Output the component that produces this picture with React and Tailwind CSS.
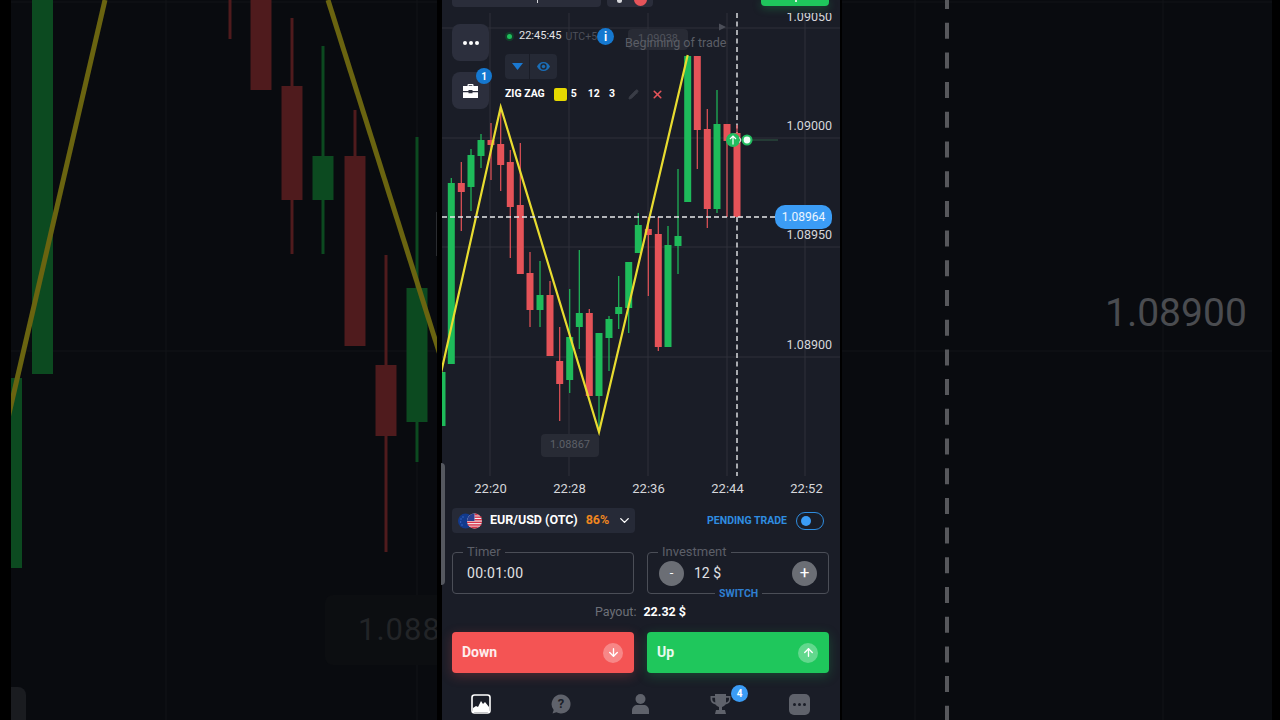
import { ArrowDown, ArrowUp, ChevronDown, Pencil, X } from 'lucide-react';

const FONT = 'font-[Roboto,"Liberation_Sans",sans-serif]';

// x, wick top, wick bottom, body top, body bottom, up?
const candles = [
  [451.3, 178, 364, 183, 364, 1],
  [461.3, 162, 231, 183, 192, 0],
  [471, 149, 211, 155, 187, 1],
  [481, 134, 168, 140, 156, 1],
  [491, 123, 180, 140, 145, 0],
  [500.7, 108, 191, 144, 165, 0],
  [510.3, 150, 258, 162, 207, 0],
  [520.3, 143, 274, 205, 274, 0],
  [530, 252, 327, 273, 310, 0],
  [540, 261, 327, 295, 310, 1],
  [550, 281, 356, 295, 356, 0],
  [559.7, 327, 421, 361, 384, 0],
  [569.7, 289, 393, 337, 380, 1],
  [579.3, 250, 349, 313, 327, 1],
  [589.3, 309, 396, 313, 396, 0],
  [599, 333, 432, 333, 396, 1],
  [609, 316, 371, 319, 338, 1],
  [618.7, 276, 329, 307, 314, 1],
  [628.7, 262, 333, 262, 308, 1],
  [638.3, 213, 253, 225, 253, 1],
  [648.3, 217, 296, 229, 235, 0],
  [658.3, 217, 351, 234, 347, 0],
  [668, 226, 347, 245, 347, 1],
  [678, 169, 274, 236, 246, 1],
  [687.7, 56, 202, 56, 202, 1],
  [697.3, 56, 169, 56, 130, 0],
  [707.3, 109, 228, 129, 209, 0],
  [717, 90, 213, 124, 209, 1],
  [727, 124, 217, 124, 141, 0],
  [737, 125, 217, 133, 217, 0],
];

// the blurred copies of the chart left and right of the phone video
const sideCandles = [
  [16.5, 378, 568, 378, 568, 1, 11],
  [42.5, 0, 374, 0, 374, 1, 21],
  [230, 0, 39, 0, 0, 0, 3],
  [261, 0, 90, 0, 90, 0, 21],
  [292, 18, 254, 86, 200, 0, 21],
  [323, 46, 254, 156, 200, 1, 21],
  [355, 110, 346, 156, 346, 0, 21],
  [386, 255, 552, 365, 436, 0, 21],
  [417, 137, 462, 288, 422, 1, 21],
];

const priceLabels = [
  ['1.09050', 'top-[-4px]'],
  ['1.09000', 'top-[105px]'],
  ['1.08950', 'top-[214px]'],
  ['1.08900', 'top-[324px]'],
];

function Chart() {
  return (
    <svg viewBox="442 13 398 463" className="block w-[398px] h-[463px]">
      <g stroke="#2e313b" strokeWidth="1">
        {[28, 138, 247, 357].map((y) => (
          <line key={y} x1="442" x2="840" y1={y} y2={y} />
        ))}
        {[490, 569, 648, 727, 805].map((x) => (
          <line key={x} x1={x} x2={x} y1="13" y2="476" />
        ))}
      </g>
      <line x1="737" x2="737" y1="13" y2="476" stroke="#e6e7ea" strokeWidth="1.4" strokeDasharray="5 3.5" />
      <rect x="442" y="372" width="3.5" height="54" fill="#1ebb5a" />
      {candles.map(([x, wt, wb, bt, bb, up]) => (
        <g key={x} fill={up ? '#1ebb5a' : '#e55358'}>
          <rect x={x - 0.6} y={wt} width="1.2" height={wb - wt} />
          <rect x={x - 3.5} y={bt} width="7" height={bb - bt} />
        </g>
      ))}
      <polyline
        points="441,373 500.7,107 599,432 687.7,55"
        fill="none"
        stroke="#e8dc30"
        strokeWidth="2.2"
      />
      <line x1="442" x2="775" y1="217" y2="217" stroke="#e6e7ea" strokeWidth="1.4" strokeDasharray="5 3" />
      <line x1="752" x2="778" y1="140" y2="140" stroke="#2e5a45" strokeWidth="1" />
      <circle cx="733" cy="140" r="7" fill="#22bd5f" />
      <path d="M733 144.5v-8.5M730 139l3-3 3 3" fill="none" stroke="#fff" strokeWidth="1.2" />
      <path d="M739.5 137.5l1.5 2.5-1.5 2.5" fill="none" stroke="#fff" strokeWidth="1" />
      <circle cx="747" cy="140" r="5.5" fill="#22bd5f" />
      <circle cx="747" cy="140" r="3.4" fill="#f2fff7" />
      <path d="M719 23.5l7 3.5-7 3.5z" fill="#4b4e58" />
    </svg>
  );
}

function SideChartLeft() {
  return (
    <svg viewBox="11 0 426 720" className="block w-[426px] h-[720px]">
      <g stroke="#121418" strokeWidth="1">
        <line x1="11" x2="437" y1="351" y2="351" />
        <line x1="11" x2="437" y1="2" y2="2" />
        <line x1="166" x2="166" y1="0" y2="720" />
        <line x1="417" x2="417" y1="0" y2="720" />
      </g>
      {sideCandles.map(([x, wt, wb, bt, bb, up, w]) => (
        <g key={x} fill={up ? '#0c4a20' : '#4f1b1d'}>
          <rect x={x - 1.5} y={wt} width="3" height={wb - wt} />
          <rect x={x - w / 2} y={bt} width={w} height={bb - bt} />
        </g>
      ))}
      <polyline points="8,418 105,0" fill="none" stroke="#6a6410" strokeWidth="5" />
      <polyline points="328,0 440,355" fill="none" stroke="#6a6410" strokeWidth="5" />
      <rect x="436" y="212" width="1" height="44" fill="#2a2c30" />
    </svg>
  );
}

function SideChartRight() {
  return (
    <svg viewBox="842 0 430 720" className="block w-[430px] h-[720px]">
      <g stroke="#121418" strokeWidth="1">
        <line x1="842" x2="1272" y1="351" y2="351" />
        <line x1="842" x2="1272" y1="2" y2="2" />
        <line x1="915" x2="915" y1="0" y2="720" />
        <line x1="1163" x2="1163" y1="0" y2="720" />
      </g>
      <line x1="947" x2="947" y1="-7" y2="720" stroke="#57585c" strokeWidth="4" strokeDasharray="16 13.7" />
    </svg>
  );
}

function Field({ label, children }) {
  return (
    <div className="relative flex-1 h-[42px] border border-[#4b4e57] rounded flex items-center">
      <span className="absolute left-[10px] top-[-9px] bg-[#1a1d27] px-[4px] text-[13px] leading-[16px] text-[#5c5f68]">
        {label}
      </span>
      {children}
    </div>
  );
}

function TradeButton({ label, bg, shadow, Icon }) {
  return (
    <button className={`flex-1 h-[41px] rounded flex items-center justify-between pl-[10px] pr-[11px] ${bg} ${shadow}`}>
      <span className="text-[14px] font-bold text-white/90">{label}</span>
      <span className="w-[20px] h-[20px] rounded-full bg-white/30 flex items-center justify-center">
        <Icon size={13} strokeWidth={2.5} className="text-white" />
      </span>
    </button>
  );
}

function Flags() {
  return (
    <svg viewBox="0 0 26 16" className="w-[26px] h-[16px]">
      <circle cx="7.5" cy="8" r="7.5" fill="#123a8c" />
      <g fill="#3f6fd0">
        <circle cx="5" cy="4" r="0.7" />
        <circle cx="3" cy="6" r="0.7" />
        <circle cx="2.6" cy="9" r="0.7" />
        <circle cx="4" cy="12" r="0.7" />
      </g>
      <circle cx="16.5" cy="8" r="7.5" fill="#f4f4f6" />
      <g fill="#d8344a">
        <path d="M16.5 .5a7.5 7.5 0 0 1 5 1.9h-5z" />
        <rect x="16.5" y="3.4" width="7" height="1.5" />
        <rect x="16.5" y="6" width="7.5" height="1.5" />
        <rect x="9" y="8.6" width="15" height="1.5" />
        <rect x="9.8" y="11.2" width="13.4" height="1.5" />
        <path d="M11.5 13.6h10a7.5 7.5 0 0 1-10 0z" />
      </g>
      <path d="M16.5.5v7.4H9a7.5 7.5 0 0 1 7.5-7.4z" fill="#2a3f8f" />
    </svg>
  );
}

function BottomNav() {
  return (
    <div className="h-[47px] flex items-start pt-[21px] text-[#5f626b]">
      <div className="w-[80px] ml-[-1px] flex justify-center">
        <svg width="20" height="20" viewBox="0 0 20 20">
          <rect x="1" y="1" width="18" height="18" rx="2.5" fill="#1a1d27" stroke="#fff" strokeWidth="1.6" />
          <path d="M2 18V14l3-2 2 1 3-6 2 3 2-2 4 5v5z" fill="#fff" />
        </svg>
      </div>
      <div className="w-[80px] flex justify-center">
        <div className="relative w-[20px] h-[20px]">
          <svg width="20" height="20" viewBox="0 0 20 20" fill="currentColor">
            <path d="M10 .5a9.500 9.500 0 1 1-4.600 17.800L1.500 19.500l1.200-3.600A9.500 9.500 0 0 1 10 .5z" />
          </svg>
          <span className="absolute inset-0 flex items-center justify-center text-[13px] font-bold text-[#1a1d27]">?</span>
        </div>
      </div>
      <div className="w-[79px] flex justify-center">
        <svg width="19" height="20" viewBox="0 0 19 20" fill="currentColor">
          <circle cx="9.5" cy="5" r="5" />
          <path d="M1 20v-3.500C1 13 3.500 11 6.500 11h6c3 0 5.500 2 5.500 5.500V20z" />
        </svg>
      </div>
      <div className="relative w-[80px] flex justify-center">
        <svg width="21" height="20" viewBox="0 0 21 20" fill="currentColor">
          <path fillRule="evenodd" d="M5 0h11v2h4.500v3c0 3-2 5-5 5.500-.8 1.200-2 2-3.500 2.400V16h3l1 4H5l1-4h3v-3.100c-1.500-.4-2.700-1.200-3.500-2.400-3-.5-5-2.500-5-5.500V2H5zm0 3.800H2.300V5c0 1.700 1 3 3 3.600zm11 0v4.800c2-.6 3-1.900 3-3.600V3.800z" />
        </svg>
        <span className="absolute left-[51px] top-[-9px] w-[17px] h-[17px] rounded-full bg-[#3b9cf5] flex items-center justify-center text-[10px] font-bold text-white">
          4
        </span>
      </div>
      <div className="w-[79px] flex justify-center">
        <div className="w-[21px] h-[21px] rounded-[5px] bg-[#5f626b] flex items-center justify-center gap-[2px]">
          <span className="w-[3px] h-[3px] rounded-full bg-[#1a1d27]" />
          <span className="w-[3px] h-[3px] rounded-full bg-[#1a1d27]" />
          <span className="w-[3px] h-[3px] rounded-full bg-[#1a1d27]" />
        </div>
      </div>
    </div>
  );
}

export default function App() {
  return (
    <div className={`flex w-[1280px] h-[720px] overflow-hidden bg-black ${FONT}`}>
      <div className="relative w-[442px] pl-[11px] overflow-hidden">
        <div className="w-[426px] h-[720px] bg-[#090b0f] overflow-hidden relative">
          <SideChartLeft />
          <div className="absolute left-[314px] top-[595px] w-[130px] h-[70px] rounded-lg bg-[#0c0e11] pl-[33px] flex items-center text-[31px] tracking-[1px] text-[#222427]">
            1.08867
          </div>
          <div className="absolute left-0 top-[687px] w-[15px] h-[40px] rounded-tr-lg bg-[#1a1c20]" />
        </div>
      </div>

      <div className="relative w-[398px] h-[720px] bg-[#1a1d27] flex flex-col">
        <div className="absolute left-[-1px] top-[463px] w-[4px] h-[122px] rounded-r bg-[#55585f]" />

        {/* top of the cropped header */}
        <div className="h-[13px] flex items-start pl-[10px] pr-[11px]">
          <div className="relative w-[149px] h-[7px] rounded-b bg-[#2a2d3a]">
            <span className="absolute left-[85px] top-0 w-[1px] h-[3px] bg-[#d6d7db]" />
          </div>
          <div className="ml-[6px] w-[46px] h-[7px] rounded-b bg-[#2a2d3a] relative overflow-hidden">
            <span className="absolute left-[10px] top-0 w-[5px] h-[3px] rounded-b bg-[#d6d7db]" />
            <span className="absolute left-[27px] top-[-7px] w-[13px] h-[13px] rounded-full bg-[#e5545a]" />
          </div>
          <div className="relative ml-auto w-[68px] h-[6px] rounded-b bg-[#1fc75c] shadow-[0_2px_8px_rgba(31,199,92,0.35)]">
            <span className="absolute left-[34px] top-0 w-[2px] h-[2px] bg-white/80" />
          </div>
        </div>

        <div className="relative h-[463px] overflow-hidden">
          <Chart />

          {priceLabels.map(([text, top]) => (
            <span key={text} className={`absolute right-[8px] text-[12.5px] leading-[16px] text-[#d6d7db] ${top}`}>
              {text}
            </span>
          ))}

          <div className="absolute left-[333px] top-[192px] w-[57px] h-[24px] rounded-[10px] bg-[#3b9cf5] flex items-center justify-center text-[12px] text-white/90">
            1.08964
          </div>

          <div className="absolute left-[10px] top-[11px] flex flex-col gap-[11px]">
            <div className="w-[37px] h-[37px] rounded-lg bg-[#2c2f3d] flex items-center justify-center gap-[2px]">
              <span className="w-[4px] h-[4px] rounded-full bg-white" />
              <span className="w-[4px] h-[4px] rounded-full bg-white" />
              <span className="w-[4px] h-[4px] rounded-full bg-white" />
            </div>
            <div className="relative w-[37px] h-[37px] rounded-lg bg-[#2c2f3d] flex items-center justify-center">
              <svg width="15" height="14" viewBox="0 0 15 14" fill="#fff">
                <path d="M4.500 2V1a1 1 0 0 1 1-1h4a1 1 0 0 1 1 1v1H15v5H9.500V6h-4v1H0V2zm1.200 0h3.600V1.200H5.700zM0 8.200h5.500v1h4v-1H15V14H0z" fillRule="evenodd" />
              </svg>
              <span className="absolute right-[-3px] top-[-4px] w-[16px] h-[16px] rounded-full bg-[#1578d0] flex items-center justify-center text-[10px] font-bold text-white">
                1
              </span>
            </div>
          </div>

          <div className="absolute left-[63px] top-[15px] flex items-center h-[17px]">
            <span className="w-[9px] h-[9px] rounded-full bg-[#123f2a] flex items-center justify-center">
              <span className="w-[5px] h-[5px] rounded-full bg-[#1fc05c]" />
            </span>
            <span className="ml-[5px] text-[11px] text-[#e2e3e6]">22:45:45</span>
            <span className="ml-[4px] text-[10.5px] text-[#4d505a]">UTC+5</span>
            <span className="w-[17px] h-[17px] rounded-full bg-[#1578d0] flex items-center justify-center text-[12px] font-bold text-white">
              i
            </span>
          </div>

          <div className="absolute left-[186px] top-[16px] w-[60px] h-[21px] rounded bg-[#282b35] flex items-center justify-center text-[11px] text-[#4f525b]">
            1.09038
          </div>
          <span className="absolute left-[183px] top-[23px] text-[12.5px] leading-[14px] text-[#5b5e66]">Beginning of trade</span>

          <div className="absolute left-[63px] top-[41px] w-[52px] h-[25px] rounded bg-[#252935] flex items-center">
            <div className="w-[25px] h-full border-r border-[#1a1d27] flex items-center justify-center">
              <svg width="11" height="7" viewBox="0 0 11 7">
                <path d="M0 0h11L5.500 7z" fill="#1a78d0" />
              </svg>
            </div>
            <div className="flex-1 flex items-center justify-center">
              <svg width="13" height="9" viewBox="0 0 13 9">
                <path fillRule="evenodd" d="M6.500 0C9.500 0 11.800 1.800 13 4.500 11.800 7.200 9.500 9 6.500 9S1.200 7.200 0 4.500C1.200 1.800 3.500 0 6.500 0zm0 1.300a3.200 3.200 0 1 0 0 6.400 3.200 3.200 0 0 0 0-6.400z" fill="#1a6eb8" />
                <circle cx="6.500" cy="4.500" r="1.700" fill="#1a6eb8" />
              </svg>
            </div>
          </div>

          <div className="absolute left-[63px] top-[74px] flex items-center h-[14px] text-[10.5px] font-bold text-white">
            <span>ZIG ZAG</span>
            <span className="ml-[9px] w-[13px] h-[13px] rounded-[2px] bg-[#e6d900]" />
            <span className="ml-[4px]">5</span>
            <span className="ml-[11px]">12</span>
            <span className="ml-[9px]">3</span>
            <Pencil size={11} fill="#3a3d47" className="ml-[13px] text-[#3a3d47]" />
            <X size={13} strokeWidth={3} className="ml-[12px] text-[#e5545a]" />
          </div>

          <div className="absolute left-[99px] top-[421px] w-[58px] h-[23px] rounded bg-[#282b35] flex items-center justify-center text-[11px] text-[#5d6068]">
            1.08867
          </div>
        </div>

        <div className="h-[24px] pt-[1px] flex items-center pl-[9px] text-[13px] text-[#d6d7db]">
          {['22:20', '22:28', '22:36', '22:44', '22:52'].map((t) => (
            <span key={t} className="w-[79px] shrink-0 text-center">
              {t}
            </span>
          ))}
        </div>

        <div className="mt-[8px] pl-[10px] pr-[11px] flex items-center justify-between h-[25px]">
          <div className="w-[183px] h-[25px] rounded bg-[#262a37] flex items-center pl-[6px]">
            <Flags />
            <span className="ml-[6px] text-[12.5px] font-bold text-white">EUR/USD (OTC)</span>
            <span className="ml-[8px] text-[12.5px] font-bold text-[#ee861f]">86%</span>
            <ChevronDown size={15} strokeWidth={2.2} className="ml-[8px] text-white" />
          </div>
          <div className="flex items-center pr-[5px] pt-[1px]">
            <span className="text-[10.5px] font-bold text-[#2f8de0]">PENDING TRADE</span>
            <span className="ml-[9px] w-[28px] h-[18px] rounded-full border border-[#2f8de0] flex items-center pl-[4px]">
              <span className="w-[10px] h-[10px] rounded-full bg-[#3b9cf5]" />
            </span>
          </div>
        </div>

        <div className="mt-[19px] pl-[10px] pr-[11px] flex gap-[13px]">
          <Field label="Timer">
            <span className="ml-[14px] text-[14px] tracking-[0.3px] text-[#e0e1e4]">00:01:00</span>
          </Field>
          <Field label="Investment">
            <span className="ml-[11px] w-[25px] h-[25px] rounded-full bg-[#6b6e75] flex items-center justify-center text-[13px] text-white">-</span>
            <span className="ml-[10px] text-[14px] text-[#e0e1e4]">12 $</span>
            <span className="ml-auto mr-[11px] w-[25px] h-[25px] rounded-full bg-[#6b6e75] flex items-center justify-center text-[17px] text-white">+</span>
            <span className="absolute left-[67px] top-[33px] bg-[#1a1d27] px-[4px] text-[10.5px] leading-[16px] font-bold text-[#2f7fd0]">SWITCH</span>
          </Field>
        </div>

        <div className="mt-[10px] h-[16px] flex items-center justify-center pr-[1px] text-[12.5px]">
          <span className="text-[#6d7078]">Payout:</span>
          <span className="ml-[7px] font-bold text-white">22.32 $</span>
        </div>

        <div className="mt-[12px] pl-[10px] pr-[11px] flex gap-[13px]">
          <TradeButton label="Down" bg="bg-[#f45454]" shadow="shadow-[0_3px_12px_rgba(244,84,84,0.25)]" Icon={ArrowDown} />
          <TradeButton label="Up" bg="bg-[#1fc75c]" shadow="shadow-[0_3px_12px_rgba(31,199,92,0.25)]" Icon={ArrowUp} />
        </div>

        <BottomNav />
      </div>

      <div className="w-[440px] pl-[2px] overflow-hidden">
        <div className="relative w-[430px] h-[720px] bg-[#090b0f] overflow-hidden">
          <SideChartRight />
          <span className="absolute left-[263px] top-[291px] text-[39px] leading-[44px] text-[#4a4c50]">1.08900</span>
        </div>
      </div>
    </div>
  );
}
